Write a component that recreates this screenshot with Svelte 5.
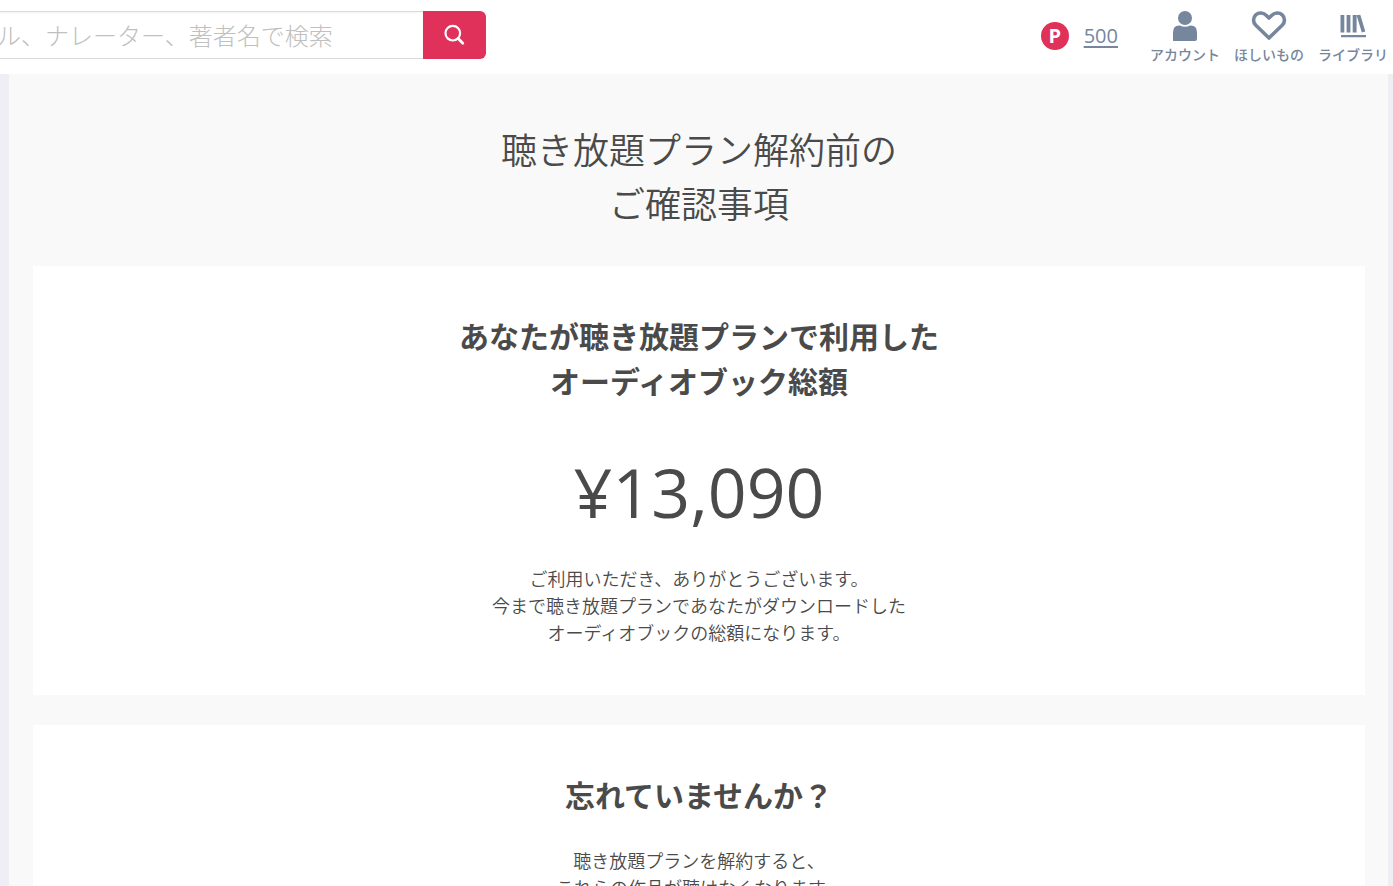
<script>
  let keyword = "";
  const points = 500;

  const menu = [
    { icon: "account", label: "アカウント" },
    { icon: "heart", label: "ほしいもの" },
    { icon: "library", label: "ライブラリ" },
  ];

  const cards = [
    {
      title: ["あなたが聴き放題プランで利用した", "オーディオブック総額"],
      price: "¥13,090",
      text: [
        "ご利用いただき、ありがとうございます。",
        "今まで聴き放題プランであなたがダウンロードした",
        "オーディオブックの総額になります。",
      ],
    },
    {
      title: ["忘れていませんか？"],
      text: ["聴き放題プランを解約すると、", "これらの作品が聴けなくなります。"],
    },
  ];
</script>

<div class="page">
  <header>
    <form class="search" on:submit|preventDefault>
      <input
        type="text"
        aria-label="検索"
        placeholder="タイトル、ナレーター、著者名で検索"
        bind:value={keyword}
      />
      <button type="submit" aria-label="検索する">
        <svg width="22" height="22" viewBox="0 0 22 22" fill="none" stroke="#fff">
          <circle cx="8.8" cy="9.2" r="7.300" stroke-width="2.2" />
          <path d="M14.200 14.600l4.600 4.600" stroke-width="2.800" stroke-linecap="round" />
        </svg>
      </button>
    </form>

    <div class="points">
      <span class="badge">P</span>
      <a href="#points">{points}</a>
    </div>

    <nav>
      {#each menu as item}
        <a href="#{item.icon}">
          {#if item.icon === "account"}
            <svg width="36" height="31" viewBox="0 0 36 31" fill="currentColor">
              <circle cx="18" cy="7" r="7" />
              <path
                d="M6 30v-8.500q0-7 6-7h.8q5.200 2.400 10.400 0h.8q6 0 6 7v6.500q0 2-2 2z"
              />
            </svg>
          {:else if item.icon === "heart"}
            <svg
              width="36"
              height="31"
              viewBox="0 0 36 31"
              fill="none"
              stroke="currentColor"
              stroke-width="3.6"
              stroke-linejoin="round"
            >
              <path
                d="M18 27L4.800 14.200C1.800 11.400 1.800 6.400 4.800 3.800C8 1 12.600 1.600 15.400 4.400L18 7L20.600 4.400C23.400 1.600 28 1 31.200 3.800C34.200 6.400 34.200 11.400 31.200 14.200Z"
              />
            </svg>
          {:else}
            <svg width="36" height="31" viewBox="0 0 36 31" fill="currentColor">
              <path
                d="M5.500 4h3.800v17.500H5.500zM11.600 4h3.800v17.500h-3.800zM17.700 4h3.900v17.500h-3.900zM21.600 4.200l3.700-.4 5 16.800-3.500 1zM6 24h25v2.300H6z"
              />
            </svg>
          {/if}
          <span>{item.label}</span>
        </a>
      {/each}
    </nav>
  </header>

  <main>
    <h1>聴き放題プラン解約前の<br />ご確認事項</h1>

    {#each cards as card}
      <section>
        <h2>
          {#each card.title as line}<span>{line}</span>{/each}
        </h2>
        {#if card.price}
          <p class="price">{card.price}</p>
        {/if}
        <p class="text">
          {#each card.text as line}<span>{line}</span>{/each}
        </p>
      </section>
    {/each}
  </main>
</div>

<style>
  :global(body) {
    margin: 0;
    background: #eeeef4;
  }

  .page {
    height: 100vh;
    overflow: hidden;
    color: #4a4a4a;
    font-family: "Noto Sans CJK JP", sans-serif;
    font-weight: 350;
  }

  header {
    display: flex;
    align-items: flex-start;
    box-sizing: border-box;
    height: 74px;
    padding: 11px 5px 0 0;
    background: #fff;
  }

  .search {
    display: flex;
    height: 48px;
    margin-left: -100px;
    margin-right: auto;
  }

  .search input {
    box-sizing: border-box;
    width: 523px;
    padding: 0 24px 2px;
    border: 1px solid #dbdbdb;
    border-right: 0;
    border-radius: 6px 0 0 6px;
    box-shadow: inset 0 1px 2px rgba(10, 10, 10, 0.05);
    color: #4a4a4a;
    font: inherit;
    font-size: 24px;
    font-weight: 300;
    outline: none;
  }

  .search input::placeholder {
    color: #c0c0c0;
    opacity: 1;
  }

  .search button {
    display: flex;
    align-items: center;
    justify-content: center;
    width: 63px;
    padding: 0;
    border: 0;
    border-radius: 0 6px 6px 0;
    background: #e0315a;
    cursor: pointer;
  }

  .points {
    display: flex;
    align-items: center;
    gap: 15px;
    height: 50px;
    margin-right: 32px;
    font-family: "Open Sans", sans-serif;
  }

  .badge {
    width: 28px;
    border-radius: 50%;
    background: #e0315a;
    color: #fff;
    font-size: 20px;
    font-weight: 700;
    line-height: 28px;
    text-align: center;
  }

  .points a {
    color: #76869d;
    font-size: 20px;
    font-weight: 400;
    line-height: 28px;
    text-underline-offset: 3px;
  }

  nav {
    display: flex;
    gap: 14px;
  }

  nav a {
    display: flex;
    flex-direction: column;
    align-items: center;
    width: 70px;
    color: #76869d;
    font-size: 14px;
    font-weight: 500;
    line-height: 24px;
    text-decoration: none;
    white-space: nowrap;
  }

  main {
    margin: 0 5px 0 9px;
    padding: 47px 23px 48px 24px;
    background: #f9f9f9;
    text-align: center;
  }

  h1 {
    margin: 0 0 37px;
    font-size: 36px;
    font-weight: 350;
    line-height: 54px;
  }

  section {
    margin-bottom: 30px;
    padding: 47px 24px 49px;
    background: #fff;
  }

  h2 {
    margin: 0 0 30px;
    font-size: 30px;
    font-weight: 700;
    line-height: 45px;
  }

  h2 span,
  .text span {
    display: block;
  }

  .price {
    margin: 35px 0 19px;
    font-family: "Open Sans", sans-serif;
    font-size: 68px;
    font-weight: 400;
    line-height: 108px;
  }

  .text {
    margin: 0;
    font-size: 18px;
    line-height: 27px;
  }
</style>
